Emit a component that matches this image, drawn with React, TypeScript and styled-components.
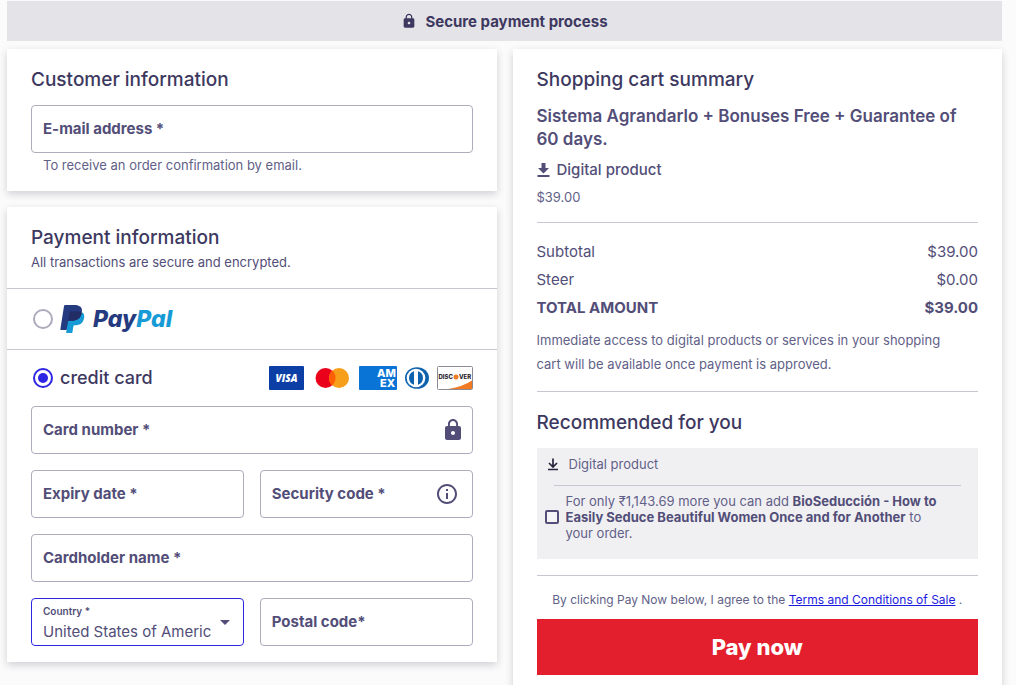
import React from 'react';
import styled, { createGlobalStyle, css } from 'styled-components';

const ink = '#3d3860';
const text = '#524e78';
const muted = '#625f88';
const line = '#c7c6d2';
const outline = '#aeabbd';
const accent = '#2d26e3';

const GlobalStyle = createGlobalStyle`
  *, *::before, *::after { box-sizing: border-box; }
  body {
    margin: 0;
    background: #fbfbfb;
    color: ${text};
    font-family: Inter, 'Liberation Sans', sans-serif;
    font-size: 15px;
  }
  h1, h2, h3, p, fieldset { margin: 0; }
  button, input, select { font: inherit; color: inherit; }
`;

const Page = styled.div`
  padding: 1px 14px 24px 7px;
`;

const Banner = styled.header`
  display: flex;
  align-items: center;
  justify-content: center;
  gap: 8px;
  height: 40px;
  margin-bottom: 8px;
  background: #e4e3e8;
  color: ${ink};
`;

const BannerTitle = styled.h1`
  font-size: 15px;
  font-weight: 700;
`;

const Columns = styled.main`
  display: grid;
  grid-template-columns: 1fr 1fr;
  gap: 16px;
`;

const Stack = styled.div`
  display: flex;
  flex-direction: column;
  gap: 16px;
`;

const Card = styled.section`
  background: #fff;
  box-shadow: 0 3px 8px rgba(40, 38, 70, 0.2);
`;

const CardBody = styled.div<{ $bottom: number }>`
  padding: 17px 24px ${p => p.$bottom}px;
`;

const Heading = styled.h2<{ $gap?: number }>`
  margin-bottom: ${p => p.$gap ?? 0}px;
  color: ${ink};
  font-size: 19px;
  font-weight: 500;
  line-height: 28px;
`;

const FieldBox = styled.div`
  display: grid;
  align-items: center;
  min-width: 0;

  & > * { grid-area: 1 / 1; }
`;

const control = css`
  width: 100%;
  height: 48px;
  border: 1px solid ${outline};
  border-radius: 4px;
  background: #fff;
  outline: none;

  &:focus { border-color: ${accent}; }
`;

const Input = styled.input`
  ${control}
  padding: 12px 12px 0;
`;

const Select = styled.select`
  ${control}
  appearance: none;
  padding: 20px 32px 0 11px;
  border-color: ${accent};
  line-height: 20px;
`;

const FieldLabel = styled.label<{ $small?: boolean }>`
  position: relative;
  justify-self: start;
  align-self: ${p => (p.$small ? 'start' : 'center')};
  padding: ${p => (p.$small ? '7px 12px 0' : '0 12px')};
  color: ${text};
  font-size: ${p => (p.$small ? 10 : 15)}px;
  font-weight: ${p => (p.$small ? 600 : 700)};
  line-height: ${p => (p.$small ? 12 : 20)}px;
  pointer-events: none;
`;

const FieldIcon = styled.span<{ $right: number }>`
  position: relative;
  display: flex;
  justify-self: end;
  margin-right: ${p => p.$right}px;
  color: ${text};
  pointer-events: none;
`;

const Helper = styled.p`
  padding-left: 12px;
  color: ${muted};
  font-size: 13px;
  line-height: 24px;
`;

const Lead = styled.p`
  font-size: 13px;
  line-height: 20px;
`;

const Method = styled.div<{ $height: number }>`
  display: flex;
  align-items: center;
  justify-content: space-between;
  height: ${p => p.$height}px;
  padding: 0 24px 0 26px;
  border-top: 1px solid ${line};
`;

const MethodLabel = styled.label`
  display: flex;
  align-items: center;
  gap: 7px;
  color: ${ink};
  font-size: 18px;
  font-weight: 500;
  line-height: 24px;
`;

const Radio = styled.input`
  appearance: none;
  display: grid;
  place-items: center;
  width: 20px;
  height: 20px;
  margin: 0;
  border: 2px solid ${outline};
  border-radius: 50%;
  background: #fff;

  &:checked { border-color: ${accent}; }
  &:checked::before {
    content: '';
    width: 10px;
    height: 10px;
    border-radius: 50%;
    background: ${accent};
  }
`;

const PayPalMark = styled.span`
  display: flex;
  align-items: center;
  gap: 8px;
`;

const PayPalName = styled.span`
  color: #253b80;
  font-family: Inter, sans-serif;
  font-size: 23px;
  font-style: italic;
  font-weight: 800;
  line-height: 28px;
`;

const PayPalTail = styled.span`
  color: #179bd7;
`;

const Brands = styled.div`
  display: flex;
  align-items: center;
  gap: 8px;
`;

const Fields = styled.div`
  display: grid;
  grid-template-columns: 1fr 1fr;
  gap: 16px;
  padding: 0 24px 16px;
`;

const Wide = styled.div`
  grid-column: 1 / -1;
`;

const ProductName = styled.h3`
  font-size: 17px;
  font-weight: 600;
  line-height: 23px;
`;

const ProductKind = styled.p`
  display: flex;
  align-items: center;
  gap: 6px;
  margin: 7px 0 5px;
  font-weight: 500;
  line-height: 24px;
`;

const Price = styled.p`
  color: ${muted};
  font-size: 13px;
  line-height: 20px;
`;

const Rule = styled.hr<{ $top: number; $bottom: number }>`
  height: 1px;
  margin: ${p => p.$top}px 0 ${p => p.$bottom}px;
  border: 0;
  background: ${line};
`;

const Totals = styled.table`
  width: 100%;
  border-collapse: collapse;

  th, td {
    height: 28px;
    padding: 0;
    font-weight: 400;
  }
  th { text-align: left; }
  td { text-align: right; }
`;

const TotalRow = styled.tr<{ $strong?: boolean }>`
  ${p => p.$strong && css`
    && > th, && > td { font-weight: 700; }
  `}
`;

const Note = styled.p`
  margin-top: 7px;
  padding-right: 24px;
  color: ${muted};
  font-size: 13px;
  line-height: 24px;
`;

const Offer = styled.div`
  padding: 4px 24px 18px 8px;
  background: #f0f0f3;
  color: ${muted};
  font-size: 13px;
`;

const OfferKind = styled.p`
  display: flex;
  align-items: center;
  gap: 8px;
  height: 24px;
  color: ${muted};
`;

const OfferRule = styled.hr`
  height: 1px;
  margin: 9px -7px 7px 9px;
  border: 0;
  background: ${line};
`;

const OfferLabel = styled.label`
  display: flex;
  align-items: center;
  gap: 7px;
  line-height: 16px;
`;

const Tick = styled.input`
  appearance: none;
  flex: none;
  width: 14px;
  height: 14px;
  margin: 0;
  border: 2px solid ${text};
  border-radius: 2px;
  background: #f4f4f6;

  &:checked { background: ${accent}; }
`;

const OfferText = styled.span`
  padding-right: 8px;
`;

const OfferName = styled.strong`
  color: ${text};
  font-weight: 700;
`;

const Terms = styled.p`
  color: ${muted};
  font-size: 12px;
  line-height: 18px;
  text-align: center;
`;

const TermsLink = styled.a`
  color: #1d1ae0;
  text-decoration: underline;
`;

const PayButton = styled.button`
  width: 100%;
  height: 56px;
  margin-top: 10px;
  border: 0;
  background: #e41f2d;
  color: #fff;
  font-size: 22px;
  font-weight: 800;
  cursor: pointer;
`;

const LockIcon = ({ size }: { size: number }) => (
  <svg width={size} height={size} viewBox="0 0 24 24" fill="currentColor" aria-hidden="true">
    <path d="M18 8h-1V6c0-2.760-2.240-5-5-5S7 3.240 7 6v2H6c-1.100 0-2 .9-2 2v10c0 1.100.9 2 2 2h12c1.100 0 2-.9 2-2V10c0-1.100-.9-2-2-2zm-6 9c-1.100 0-2-.9-2-2s.9-2 2-2 2 .9 2 2-.9 2-2 2zm3.100-9H8.900V6c0-1.710 1.390-3.100 3.100-3.100 1.710 0 3.100 1.390 3.100 3.100v2z" />
  </svg>
);

const InfoIcon = () => (
  <svg width="24" height="24" viewBox="0 0 24 24" fill="currentColor" aria-hidden="true">
    <path d="M11 7h2v2h-2zm0 4h2v6h-2zm1-9C6.480 2 2 6.480 2 12s4.480 10 10 10 10-4.480 10-10S17.520 2 12 2zm0 18c-4.410 0-8-3.590-8-8s3.590-8 8-8 8 3.590 8 8-3.590 8-8 8z" />
  </svg>
);

const ArrowIcon = () => (
  <svg width="10" height="5" viewBox="0 0 10 5" fill="currentColor" aria-hidden="true">
    <path d="M0 0h10L5 5z" />
  </svg>
);

const DownloadIcon = () => (
  <svg width="14" height="16" viewBox="0 0 14 16" fill="currentColor" aria-hidden="true">
    <path d="M4.500 1h4v5H12L6.500 11.500 1 6h3.500zM.5 13h12v2H.5z" />
  </svg>
);

const DownloadLineIcon = () => (
  <svg width="16" height="16" viewBox="0 0 16 16" fill="none" stroke="#29243d" strokeWidth="1.700" aria-hidden="true">
    <path d="M8 2.500v8M4 7l4 4 4-4M3 13.500h10" />
  </svg>
);

const PayPalIcon = () => (
  <svg width="25" height="28" viewBox="0 0 26 30" aria-hidden="true">
    <path fill="#253B80" d="M7.266,29.154l0.523-3.322l-1.165-0.027H1.061L4.927,1.292C4.939,1.218,4.978,1.149,5.035,1.1c0.057-0.049,0.13-0.076,0.206-0.076h9.38c3.114,0,5.263,0.648,6.385,1.927c0.526,0.6,0.861,1.227,1.023,1.917c0.17,0.724,0.173,1.589,0.007,2.644l-0.012,0.077v0.676l0.526,0.298c0.443,0.235,0.795,0.504,1.065,0.812c0.45,0.513,0.741,1.165,0.864,1.938c0.127,0.795,0.085,1.741-0.123,2.812c-0.24,1.232-0.628,2.305-1.152,3.183c-0.482,0.809-1.096,1.48-1.825,2c-0.696,0.494-1.523,0.869-2.458,1.109c-0.906,0.236-1.939,0.355-3.072,0.355h-0.73c-0.522,0-1.029,0.188-1.427,0.525c-0.399,0.344-0.663,0.814-0.744,1.328l-0.055,0.299l-0.924,5.855l-0.042,0.215c-0.011,0.068-0.03,0.102-0.058,0.125c-0.025,0.021-0.061,0.035-0.096,0.035H7.266z" />
    <path fill="#179BD7" d="M23.048,7.667c-0.028,0.179-0.06,0.362-0.096,0.55c-1.237,6.351-5.469,8.545-10.874,8.545H9.326c-0.661,0-1.218,0.48-1.321,1.132L6.596,26.83l-0.399,2.533c-0.067,0.428,0.263,0.814,0.695,0.814h4.881c0.578,0,1.069-0.42,1.16-0.99l0.048-0.248l0.919-5.832l0.059-0.32c0.09-0.572,0.582-0.992,1.16-0.992h0.73c4.729,0,8.431-1.92,9.513-7.476c0.452-2.321,0.218-4.259-0.978-5.622C24.022,8.286,23.573,7.945,23.048,7.667z" />
    <path fill="#222D65" d="M21.754,7.151c-0.189-0.055-0.384-0.105-0.584-0.15c-0.201-0.044-0.407-0.083-0.619-0.117c-0.742-0.12-1.555-0.177-2.426-0.177h-7.352c-0.181,0-0.353,0.041-0.507,0.115C9.927,6.985,9.675,7.306,9.614,7.699L8.05,17.605l-0.045,0.289c0.103-0.652,0.66-1.132,1.321-1.132h2.752c5.405,0,9.637-2.195,10.874-8.545c0.037-0.188,0.068-0.371,0.096-0.55c-0.313-0.166-0.652-0.308-1.017-0.429C21.941,7.208,21.848,7.179,21.754,7.151z" />
    <path fill="#253B80" d="M9.614,7.699c0.061-0.393,0.313-0.714,0.658-0.878c0.155-0.074,0.326-0.115,0.507-0.115h7.352c0.871,0,1.684,0.057,2.426,0.177c0.212,0.034,0.418,0.073,0.619,0.117c0.2,0.045,0.395,0.095,0.584,0.15c0.094,0.028,0.187,0.057,0.278,0.086c0.365,0.121,0.704,0.264,1.017,0.429c0.368-2.347-0.003-3.945-1.272-5.392C20.378,0.682,17.853,0,14.622,0h-9.38c-0.66,0-1.223,0.48-1.325,1.133L0.01,25.898c-0.077,0.49,0.301,0.932,0.795,0.932h5.791l1.454-9.225L9.614,7.699z" />
  </svg>
);

const VisaLogo = () => (
  <svg width="35" height="24" viewBox="0 0 35 24" role="img" aria-label="Visa">
    <rect width="35" height="24" rx="1" fill="#0b3fa6" />
    <text x="17.500" y="16" fill="#fff" textAnchor="middle" fontFamily="Open Sans, sans-serif" fontSize="10" fontStyle="italic" fontWeight="800">VISA</text>
  </svg>
);

const MastercardLogo = () => (
  <svg width="39" height="24" viewBox="0 0 39 24" role="img" aria-label="Mastercard">
    <circle cx="13.500" cy="12" r="10" fill="#eb001b" />
    <circle cx="27" cy="12" r="10" fill="#f79e1b" />
    <path fill="#ff5f00" d="M20.250 4.620a10 10 0 0 1 0 14.760a10 10 0 0 1 0-14.760z" />
  </svg>
);

const AmexLogo = () => (
  <svg width="38" height="24" viewBox="0 0 38 24" role="img" aria-label="American Express">
    <rect width="38" height="24" rx="1" fill="#0a73d6" />
    <text x="18" y="11" fill="#fff" fontFamily="Inter, sans-serif" fontSize="11" fontWeight="800">AM</text>
    <text x="21" y="21" fill="#fff" fontFamily="Inter, sans-serif" fontSize="11" fontWeight="800">EX</text>
  </svg>
);

const DinersLogo = () => (
  <svg width="24" height="24" viewBox="0 0 24 24" role="img" aria-label="Diners Club">
    <ellipse cx="12" cy="12" rx="12" ry="10.800" fill="#0f62ad" />
    <circle cx="11" cy="12" r="9.300" fill="#fff" />
    <path fill="#0f62ad" d="M9 5.300a7 7 0 0 0 0 13.400zM13 5.300a7 7 0 0 1 0 13.400z" />
  </svg>
);

const DiscoverLogo = () => (
  <svg width="36" height="24" viewBox="0 0 36 24" role="img" aria-label="Discover">
    <rect x=".5" y=".5" width="35" height="23" rx="1" fill="#fff" stroke="#8c8a93" />
    <path fill="#f27a22" d="M35 14.500V23H11.500Q26 20.500 35 14.500z" />
    <text x="1.500" y="13" fill="#2b2530" fontFamily="Inter, sans-serif" fontSize="6" fontWeight="800">DISC</text>
    <circle cx="19" cy="11" r="2.500" fill="#f27a22" />
    <text x="22" y="13" fill="#2b2530" fontFamily="Inter, sans-serif" fontSize="6" fontWeight="800">VER</text>
  </svg>
);

type FieldProps = { id: string; label: string; type?: string; icon?: React.ReactNode; iconRight?: number };

const Field = ({ id, label, type = 'text', icon, iconRight = 0 }: FieldProps) => (
  <FieldBox>
    <Input id={id} type={type} />
    <FieldLabel htmlFor={id}>{label}</FieldLabel>
    {icon && <FieldIcon $right={iconRight}>{icon}</FieldIcon>}
  </FieldBox>
);

export default function App() {
  return (
    <>
      <GlobalStyle />
      <Page>
        <Banner>
          <LockIcon size={16} />
          <BannerTitle>Secure payment process</BannerTitle>
        </Banner>
        <Columns>
          <Stack>
            <Card>
              <CardBody $bottom={14}>
                <Heading $gap={11}>Customer information</Heading>
                <Field id="email" type="email" label="E-mail address *" />
                <Helper>To receive an order confirmation by email.</Helper>
              </CardBody>
            </Card>
            <Card>
              <CardBody $bottom={16}>
                <Heading>Payment information</Heading>
                <Lead>All transactions are secure and encrypted.</Lead>
              </CardBody>
              <Method $height={61}>
                <MethodLabel>
                  <Radio type="radio" name="method" value="paypal" />
                  <PayPalMark>
                    <PayPalIcon />
                    <PayPalName>Pay<PayPalTail>Pal</PayPalTail></PayPalName>
                  </PayPalMark>
                </MethodLabel>
              </Method>
              <Method $height={57}>
                <MethodLabel>
                  <Radio type="radio" name="method" value="card" defaultChecked />
                  credit card
                </MethodLabel>
                <Brands>
                  <VisaLogo />
                  <MastercardLogo />
                  <AmexLogo />
                  <DinersLogo />
                  <DiscoverLogo />
                </Brands>
              </Method>
              <Fields>
                <Wide>
                  <Field id="number" label="Card number *" icon={<LockIcon size={24} />} iconRight={8} />
                </Wide>
                <Field id="expiry" label="Expiry date *" />
                <Field id="security" label="Security code *" icon={<InfoIcon />} iconRight={14} />
                <Wide>
                  <Field id="holder" label="Cardholder name *" />
                </Wide>
                <FieldBox>
                  <Select id="country" defaultValue="us">
                    <option value="us">United States of America</option>
                  </Select>
                  <FieldLabel $small htmlFor="country">Country *</FieldLabel>
                  <FieldIcon $right={14}><ArrowIcon /></FieldIcon>
                </FieldBox>
                <Field id="postal" label="Postal code*" />
              </Fields>
            </Card>
          </Stack>
          <Card>
            <CardBody $bottom={24}>
              <Heading $gap={11}>Shopping cart summary</Heading>
              <ProductName>Sistema Agrandarlo + Bonuses Free + Guarantee of 60 days.</ProductName>
              <ProductKind><DownloadIcon />Digital product</ProductKind>
              <Price>$39.00</Price>
              <Rule $top={15} $bottom={14} />
              <Totals>
                <tbody>
                  <TotalRow><th scope="row">Subtotal</th><td>$39.00</td></TotalRow>
                  <TotalRow><th scope="row">Steer</th><td>$0.00</td></TotalRow>
                  <TotalRow $strong><th scope="row">TOTAL AMOUNT</th><td>$39.00</td></TotalRow>
                </tbody>
              </Totals>
              <Note>Immediate access to digital products or services in your shopping cart will be available once payment is approved.</Note>
              <Rule $top={15} $bottom={17} />
              <Heading $gap={11}>Recommended for you</Heading>
              <Offer>
                <OfferKind><DownloadLineIcon />Digital product</OfferKind>
                <OfferRule />
                <OfferLabel>
                  <Tick type="checkbox" />
                  <OfferText>
                    For only ₹1,143.69 more you can add <OfferName>BioSeducción - How to Easily Seduce Beautiful Women Once and for Another</OfferName> to your order.
                  </OfferText>
                </OfferLabel>
              </Offer>
              <Rule $top={16} $bottom={15} />
              <Terms>By clicking Pay Now below, I agree to the <TermsLink href="#terms">Terms and Conditions of Sale</TermsLink> .</Terms>
              <PayButton type="button">Pay now</PayButton>
            </CardBody>
          </Card>
        </Columns>
      </Page>
    </>
  );
}
